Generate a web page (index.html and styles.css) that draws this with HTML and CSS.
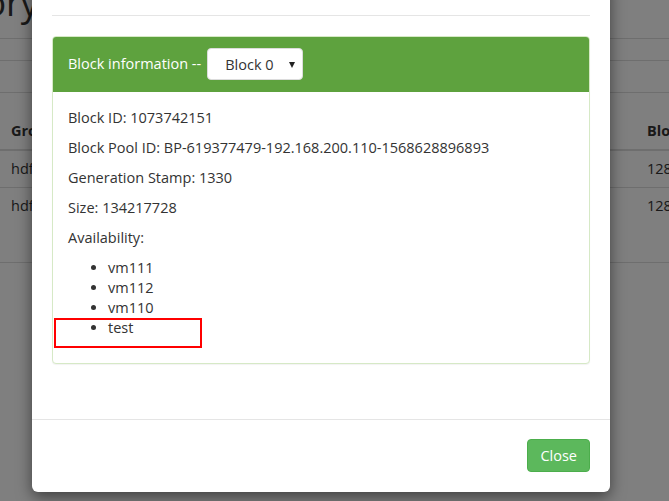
FILE: index.html
```html
<!DOCTYPE html>
<html>
<head>
<meta charset="utf-8">
<title>Block information</title>
<link rel="stylesheet" href="styles.css">
</head>
<body>
<div class="page">
  <h1 class="title">Browse Directory</h1>
  <div class="band band-a"></div>
  <div class="band band-b"></div>
  <table class="files">
    <colgroup>
      <col class="w-first">
      <col class="w-mid">
      <col class="w-last">
    </colgroup>
    <thead>
      <tr><th>Group</th><th></th><th>Block Size</th></tr>
    </thead>
    <tbody>
      <tr><td>hdfs</td><td></td><td>128 MB</td></tr>
      <tr class="tall"><td>hdfs</td><td></td><td>128 MB</td></tr>
    </tbody>
  </table>
</div>

<div class="backdrop"></div>

<div class="modal">
  <div class="modal-head"><div class="head-rule"></div></div>
  <div class="modal-body">
    <div class="panel">
      <div class="panel-heading">
        <span class="panel-title">Block information --</span>
        <span class="select-wrap">
          <select class="block-select"><option>Block 0</option><option>Block 1</option></select>
        </span>
      </div>
      <div class="panel-body">
        <p>Block ID: 1073742151</p>
        <p>Block Pool ID: BP-619377479-192.168.200.110-1568628896893</p>
        <p>Generation Stamp: 1330</p>
        <p>Size: 134217728</p>
        <p>Availability:</p>
        <ul>
          <li>vm111</li>
          <li>vm112</li>
          <li>vm110</li>
          <li>test</li>
        </ul>
      </div>
    </div>
  </div>
  <div class="modal-footer">
    <button class="btn-close" type="button">Close</button>
  </div>
</div>

<div class="annotation"></div>
</body>
</html>
```

FILE: styles.css
```css
html, body {
  margin: 0;
  padding: 0;
  background: #ffffff;
  width: 669px;
  height: 501px;
  overflow: hidden;
  font-family: "Open Sans", "Noto Sans", "Liberation Sans", sans-serif;
  color: #333333;
  font-size: 14.5px;
}

.page {
  position: relative;
  height: 501px;
}

.title {
  margin: 0 0 0 -250px;
  box-sizing: border-box;
  height: 39px;
  font-size: 36px;
  font-weight: 500;
  line-height: 6px;
  color: #333333;
  border-bottom: 1px solid #dddddd;
  white-space: nowrap;
}

.band-a {
  height: 21px;
  border-bottom: 1px solid #dddddd;
}

.band-b {
  height: 31px;
  border-bottom: 1px solid #dddddd;
}

.files {
  table-layout: fixed;
  width: 760px;
  border-collapse: collapse;
  margin-top: 20px;
}

.w-first { width: 70px; }
.w-mid { width: 566px; }
.w-last { width: 124px; }

.files th,
.files td {
  text-align: left;
  padding: 8px 11px;
  line-height: 20px;
  vertical-align: top;
  white-space: nowrap;
  overflow: hidden;
}

.files th {
  font-weight: 700;
  border-bottom: 2px solid #dddddd;
}

.files tbody td {
  border-bottom: 1px solid #dddddd;
  height: 19px;
}

.files tr.tall td {
  height: 58px;
}

.backdrop {
  position: absolute;
  inset: 0;
  background: rgba(0, 0, 0, 0.5);
}

.modal {
  position: absolute;
  left: 32px;
  top: -20px;
  width: 578px;
  box-sizing: border-box;
  background: #ffffff;
  border-radius: 6px;
  box-shadow: 0 5px 15px rgba(0, 0, 0, 0.5);
}

.modal-head {
  padding: 35px 20px 0;
}

.head-rule {
  height: 1px;
  background: #e5e5e5;
}

.modal-body {
  padding: 20px 20px 55px;
}

.panel {
  border: 1px solid #d6e9c6;
  border-radius: 4px;
  background: #ffffff;
  box-shadow: 0 1px 1px rgba(0, 0, 0, 0.05);
}

.panel-heading {
  display: flex;
  align-items: center;
  gap: 6px;
  padding: 11px 15px 12px;
  background: #5ea23e;
  border-radius: 3px 3px 0 0;
  color: #ffffff;
}

.panel-title {
  font-size: 14.5px;
  line-height: 20px;
}

.select-wrap {
  position: relative;
  display: inline-block;
}

.select-wrap::after {
  content: "";
  position: absolute;
  right: 8px;
  top: 14px;
  border-left: 3.5px solid transparent;
  border-right: 3.5px solid transparent;
  border-top: 6px solid #222222;
  pointer-events: none;
}

.block-select {
  appearance: none;
  -webkit-appearance: none;
  display: block;
  width: 96px;
  height: 32px;
  padding: 0 17px;
  margin: 0;
  border: 1px solid #dcdcdc;
  border-radius: 4px;
  background: #ffffff;
  color: #333333;
  font-family: inherit;
  font-size: 14.5px;
}

.panel-body {
  padding: 16px 15px 15px;
}

.panel-body p {
  margin: 0 0 10px;
  line-height: 20px;
}

.panel-body ul {
  margin: 0 0 10px;
  padding-left: 40px;
}

.panel-body li {
  line-height: 20px;
}

.modal-footer {
  border-top: 1px solid #e5e5e5;
  padding: 19px 20px 20px;
  display: flex;
  justify-content: flex-end;
}

.btn-close {
  font-family: inherit;
  font-size: 14.5px;
  line-height: 19px;
  padding: 6px 12px;
  color: #ffffff;
  background: #5cb85c;
  border: 1px solid #4cae4c;
  border-radius: 4px;
}

.annotation {
  position: absolute;
  left: 54px;
  top: 318px;
  width: 148px;
  height: 30px;
  box-sizing: border-box;
  border: 2px solid #ff0000;
}
```
